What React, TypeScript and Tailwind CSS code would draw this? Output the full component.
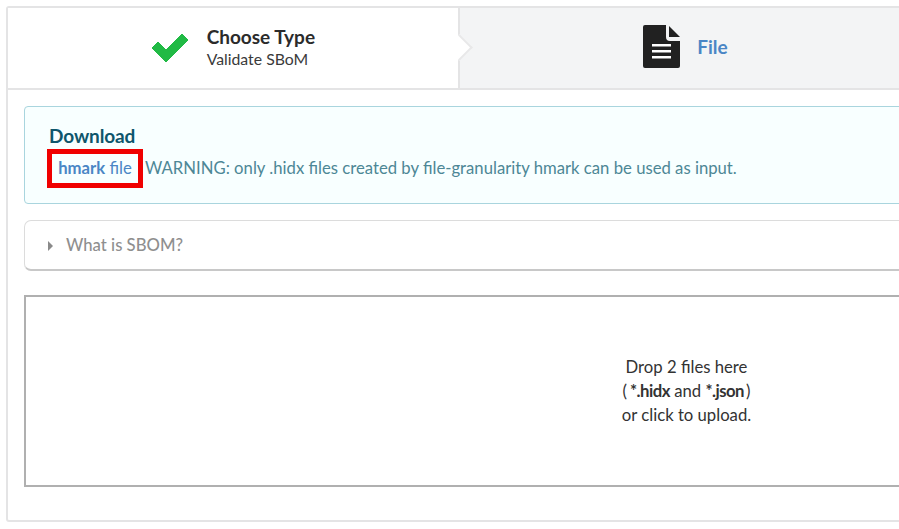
function CheckIcon() {
  return (
    <svg width="38" height="30" viewBox="0 0 38 30" className="shrink-0">
      <path d="M1 15 L7 9 L15 17 L31 1 L37 7 L15 29 Z" fill="#21ba45" stroke="#21ba45" strokeWidth="1" strokeLinejoin="round" />
    </svg>
  );
}

function FileIcon() {
  return (
    <svg width="38" height="44" viewBox="0 0 38 44" className="mb-[2px] shrink-0">
      <path d="M2 0 H23 V12 Q23 16 27 16 H37 V41 Q37 43 35 43 H2 Q0 43 0 41 V2 Q0 0 2 0 Z" fill="#212121" />
      <path d="M26 1 L37 12 H26 Z" fill="#212121" />
      <path d="M9 19 H28 V21.5 H9 Z M9 25 H28 V27.5 H9 Z M9 31 H28 V33.5 H9 Z" fill="#ffffff" />
    </svg>
  );
}

export default function App() {
  return (
    <div className="h-[529px] w-[899px] overflow-hidden bg-white pl-[6px] pt-[6px] font-['Lato','Open_Sans',sans-serif] text-[16.7px] text-[#2c2c2c]">
      <div className="h-[516px] w-[1359px] rounded-[3px] border-2 border-[#e4e4e5]">
        {/* pasos */}
        <div className="flex h-[82px] border-b-2 border-[#e4e4e5]">
          <div className="relative flex w-[452px] items-center justify-center gap-[18px] border-r-2 border-[#e4e4e5] bg-white">
            <CheckIcon />
            <div className="mb-[3px] flex flex-col">
              <span className="text-[19px] font-bold leading-[24px] text-[#2b2b2b]">Choose Type</span>
              <span className="text-[15.8px] leading-[20px] text-[#3a3a3a]">Validate SBoM</span>
            </div>
            <div className="absolute right-[-11px] top-[30px] h-[19px] w-[19px] rotate-45 border-r-2 border-t-2 border-[#e8e8e9] bg-white" />
          </div>
          <div className="flex w-[452px] items-center justify-center gap-[16px] bg-[#f3f4f5]">
            <FileIcon />
            <span className="mb-[2px] text-[19px] font-bold text-[#4a86c5]">File</span>
          </div>
          <div className="w-[452px] border-l-2 border-[#e4e4e5] bg-[#f3f4f5]" />
        </div>

        {/* contenido */}
        <div className="px-[16px] pt-[16px]">
          <div className="h-[98px] rounded-[4px] border border-[#a9d5de] bg-[#f8ffff] pl-[24px] pt-[16px] text-[#276f86]">
            <div className="text-[19px] font-bold leading-[26px] tracking-[-0.1px] text-[#0e566c]">Download</div>
            <div className="-ml-[2px] flex items-center">
              <a className="flex h-[39px] w-[96px] items-center justify-center border-[5px] border-[#f00000] text-[#4a86c5]">
                <span className="font-bold">hmark</span>&nbsp;file
              </a>
              <span className="ml-[2px] text-[#4d8796]">
                WARNING: only .hidx files created by file-granularity hmark can be used as input.
              </span>
            </div>
          </div>

          <div className="mt-[16px] flex h-[51px] items-center rounded-[7px] border border-[#dcdcdc] border-b-2 border-b-[#c8c8c8] pl-[23px] pt-[2px] font-medium text-[#8f8f8f]">
            <svg width="5" height="10" viewBox="0 0 5 10" className="mr-[13px]">
              <path d="M0 0 L5 5 L0 10 Z" fill="#8a8a8a" />
            </svg>
            What is SBOM?
          </div>

          <div className="mt-[24px] flex h-[192px] flex-col items-center justify-center border-2 border-[#b0b0b0] pb-[1px] pl-[2px] text-center leading-[24px] text-[#333333]">
            <span>Drop 2 files here</span>
            <span>
              <span className="mr-[3px]">(</span>
              <b className="tracking-[-0.5px]">*.hidx</b> and <b className="tracking-[-0.5px]">*.json</b>
              <span className="ml-[2px]">)</span>
            </span>
            <span>or click to upload.</span>
          </div>
        </div>
      </div>
    </div>
  );
}
